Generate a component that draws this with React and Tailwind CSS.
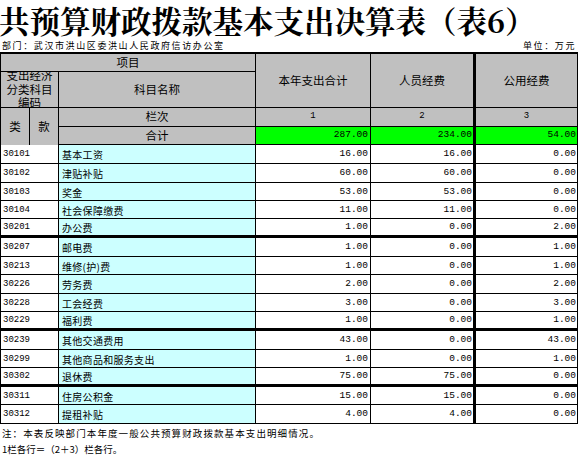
const rows = [
  { code: '30101', name: '基本工资', total: '16.00', staff: '16.00', pub: '0.00', h: 'h-[19px]' },
  { code: '30102', name: '津贴补贴', total: '60.00', staff: '60.00', pub: '0.00', h: 'h-[19px]' },
  { code: '30103', name: '奖金', total: '53.00', staff: '53.00', pub: '0.00', h: 'h-[18px]' },
  { code: '30104', name: '社会保障缴费', total: '11.00', staff: '11.00', pub: '0.00', h: 'h-[18px]' },
  { code: '30201', name: '办公费', total: '1.00', staff: '0.00', pub: '2.00', h: 'h-[19px]', thick: true },
  { code: '30207', name: '邮电费', total: '1.00', staff: '0.00', pub: '1.00', h: 'h-[19px]' },
  { code: '30213', name: '维修(护)费', total: '1.00', staff: '0.00', pub: '1.00', h: 'h-[18px]' },
  { code: '30226', name: '劳务费', total: '2.00', staff: '0.00', pub: '2.00', h: 'h-[19px]' },
  { code: '30228', name: '工会经费', total: '3.00', staff: '0.00', pub: '3.00', h: 'h-[18px]' },
  { code: '30229', name: '福利费', total: '1.00', staff: '0.00', pub: '1.00', h: 'h-[19px]', thick: true },
  { code: '30239', name: '其他交通费用', total: '43.00', staff: '0.00', pub: '43.00', h: 'h-[19px]' },
  { code: '30299', name: '其他商品和服务支出', total: '1.00', staff: '0.00', pub: '1.00', h: 'h-[18px]' },
  { code: '30302', name: '退休费', total: '75.00', staff: '75.00', pub: '0.00', h: 'h-[19px]', thick: true },
  { code: '30311', name: '住房公积金', total: '15.00', staff: '15.00', pub: '0.00', h: 'h-[18px]' },
  { code: '30312', name: '提租补贴', total: '4.00', staff: '4.00', pub: '0.00', h: 'h-[19px]' },
];

const cjk = "font-['Noto_Sans_CJK_SC','Liberation_Sans',sans-serif]";
const mono = "font-['Liberation_Mono','Noto_Sans_CJK_SC',monospace]";

export default function App() {
  return (
    <div className={`w-[578px] h-[461px] bg-white text-black overflow-hidden ${cjk}`}>
      <div className="h-[40px] leading-[41px] text-[30.5px] font-bold whitespace-nowrap font-['Noto_Serif_CJK_SC','Noto_Sans_CJK_SC',serif] -ml-[1px]">
        共预算财政拨款基本支出决算表（表6）
      </div>
      <div className="h-[12px] flex justify-between items-center text-[9px] leading-[12px] tracking-[1.6px] px-[2px]">
        <span>部门：武汉市洪山区委洪山人民政府信访办公室</span>
        <span>单位：万元</span>
      </div>

      <div className="border-t-2 border-l border-black">
        {/* 表头 */}
        <div className="grid grid-cols-[29px_29px_197px_115px_105px_102px] grid-rows-[18px_36px_19px_18px] bg-[#c0c0c0] text-[11.5px]">
          <div className="col-span-3 border-r border-b border-black flex items-center justify-center">项目</div>
          <div className="row-span-2 border-r border-b border-black flex items-center justify-center">本年支出合计</div>
          <div className="row-span-2 border-r-[3px] border-b border-black flex items-center justify-center">人员经费</div>
          <div className="row-span-2 border-r border-b border-black flex items-center justify-center">公用经费</div>

          <div className="col-span-2 border-r border-b border-black overflow-hidden flex items-center justify-center text-center leading-[13.5px]">
            支出经济分类科目编码
          </div>
          <div className="border-r border-b border-black flex items-center justify-center">科目名称</div>

          <div className="row-span-2 border-r border-black flex items-center justify-center">类</div>
          <div className="row-span-2 border-r border-black flex items-center justify-center">款</div>
          <div className="border-r border-b border-black flex items-center justify-center">栏次</div>
          <div className={`border-r border-b border-black flex items-center justify-center text-[9px] ${mono}`}>1</div>
          <div className={`border-r-[3px] border-b border-black flex items-center justify-center text-[9px] ${mono}`}>2</div>
          <div className={`border-r border-b border-black flex items-center justify-center text-[9px] ${mono}`}>3</div>

          <div className="border-r border-b border-black flex items-center justify-center">合计</div>
          <div className={`bg-[#00ff00] border-r border-b border-black flex items-center justify-end pr-[2px] text-[9.5px] ${mono}`}>287.00</div>
          <div className={`bg-[#00ff00] border-r-[3px] border-b border-black flex items-center justify-end pr-[1px] text-[9.5px] ${mono}`}>234.00</div>
          <div className={`bg-[#00ff00] border-r border-b border-black flex items-center justify-end pr-[1px] text-[9.5px] ${mono}`}>54.00</div>
        </div>

        {/* 明细 */}
        {rows.map((r) => (
          <div
            key={r.code}
            className={`grid grid-cols-[58px_197px_115px_105px_102px] ${r.h} ${r.thick ? 'border-b-[3px]' : 'border-b'} border-black`}
          >
            <div className={`border-r border-black flex items-center pl-[2px] pt-[2px] text-[9px] ${mono}`}>{r.code}</div>
            <div className="bg-[#ccffff] border-r border-black flex items-center pl-[3px] pt-[1px] text-[10px] tracking-[0.3px]">{r.name}</div>
            <div className={`border-r border-black flex items-center justify-end pr-[2px] pt-[1px] text-[9.5px] ${mono}`}>{r.total}</div>
            <div className={`border-r-[3px] border-black flex items-center justify-end pr-[1px] pt-[1px] text-[9.5px] ${mono}`}>{r.staff}</div>
            <div className={`border-r border-black flex items-center justify-end pr-[1px] pt-[1px] text-[9.5px] ${mono}`}>{r.pub}</div>
          </div>
        ))}
      </div>

      <div className="pl-[2px] pt-[1px] text-[9.5px] leading-[16px] tracking-[1.1px]">
        注：本表反映部门本年度一般公共预算财政拨款基本支出明细情况。
      </div>
      <div className="pl-[2px] text-[9.5px] leading-[16px]">1栏各行＝（2＋3）栏各行。</div>
    </div>
  );
}
